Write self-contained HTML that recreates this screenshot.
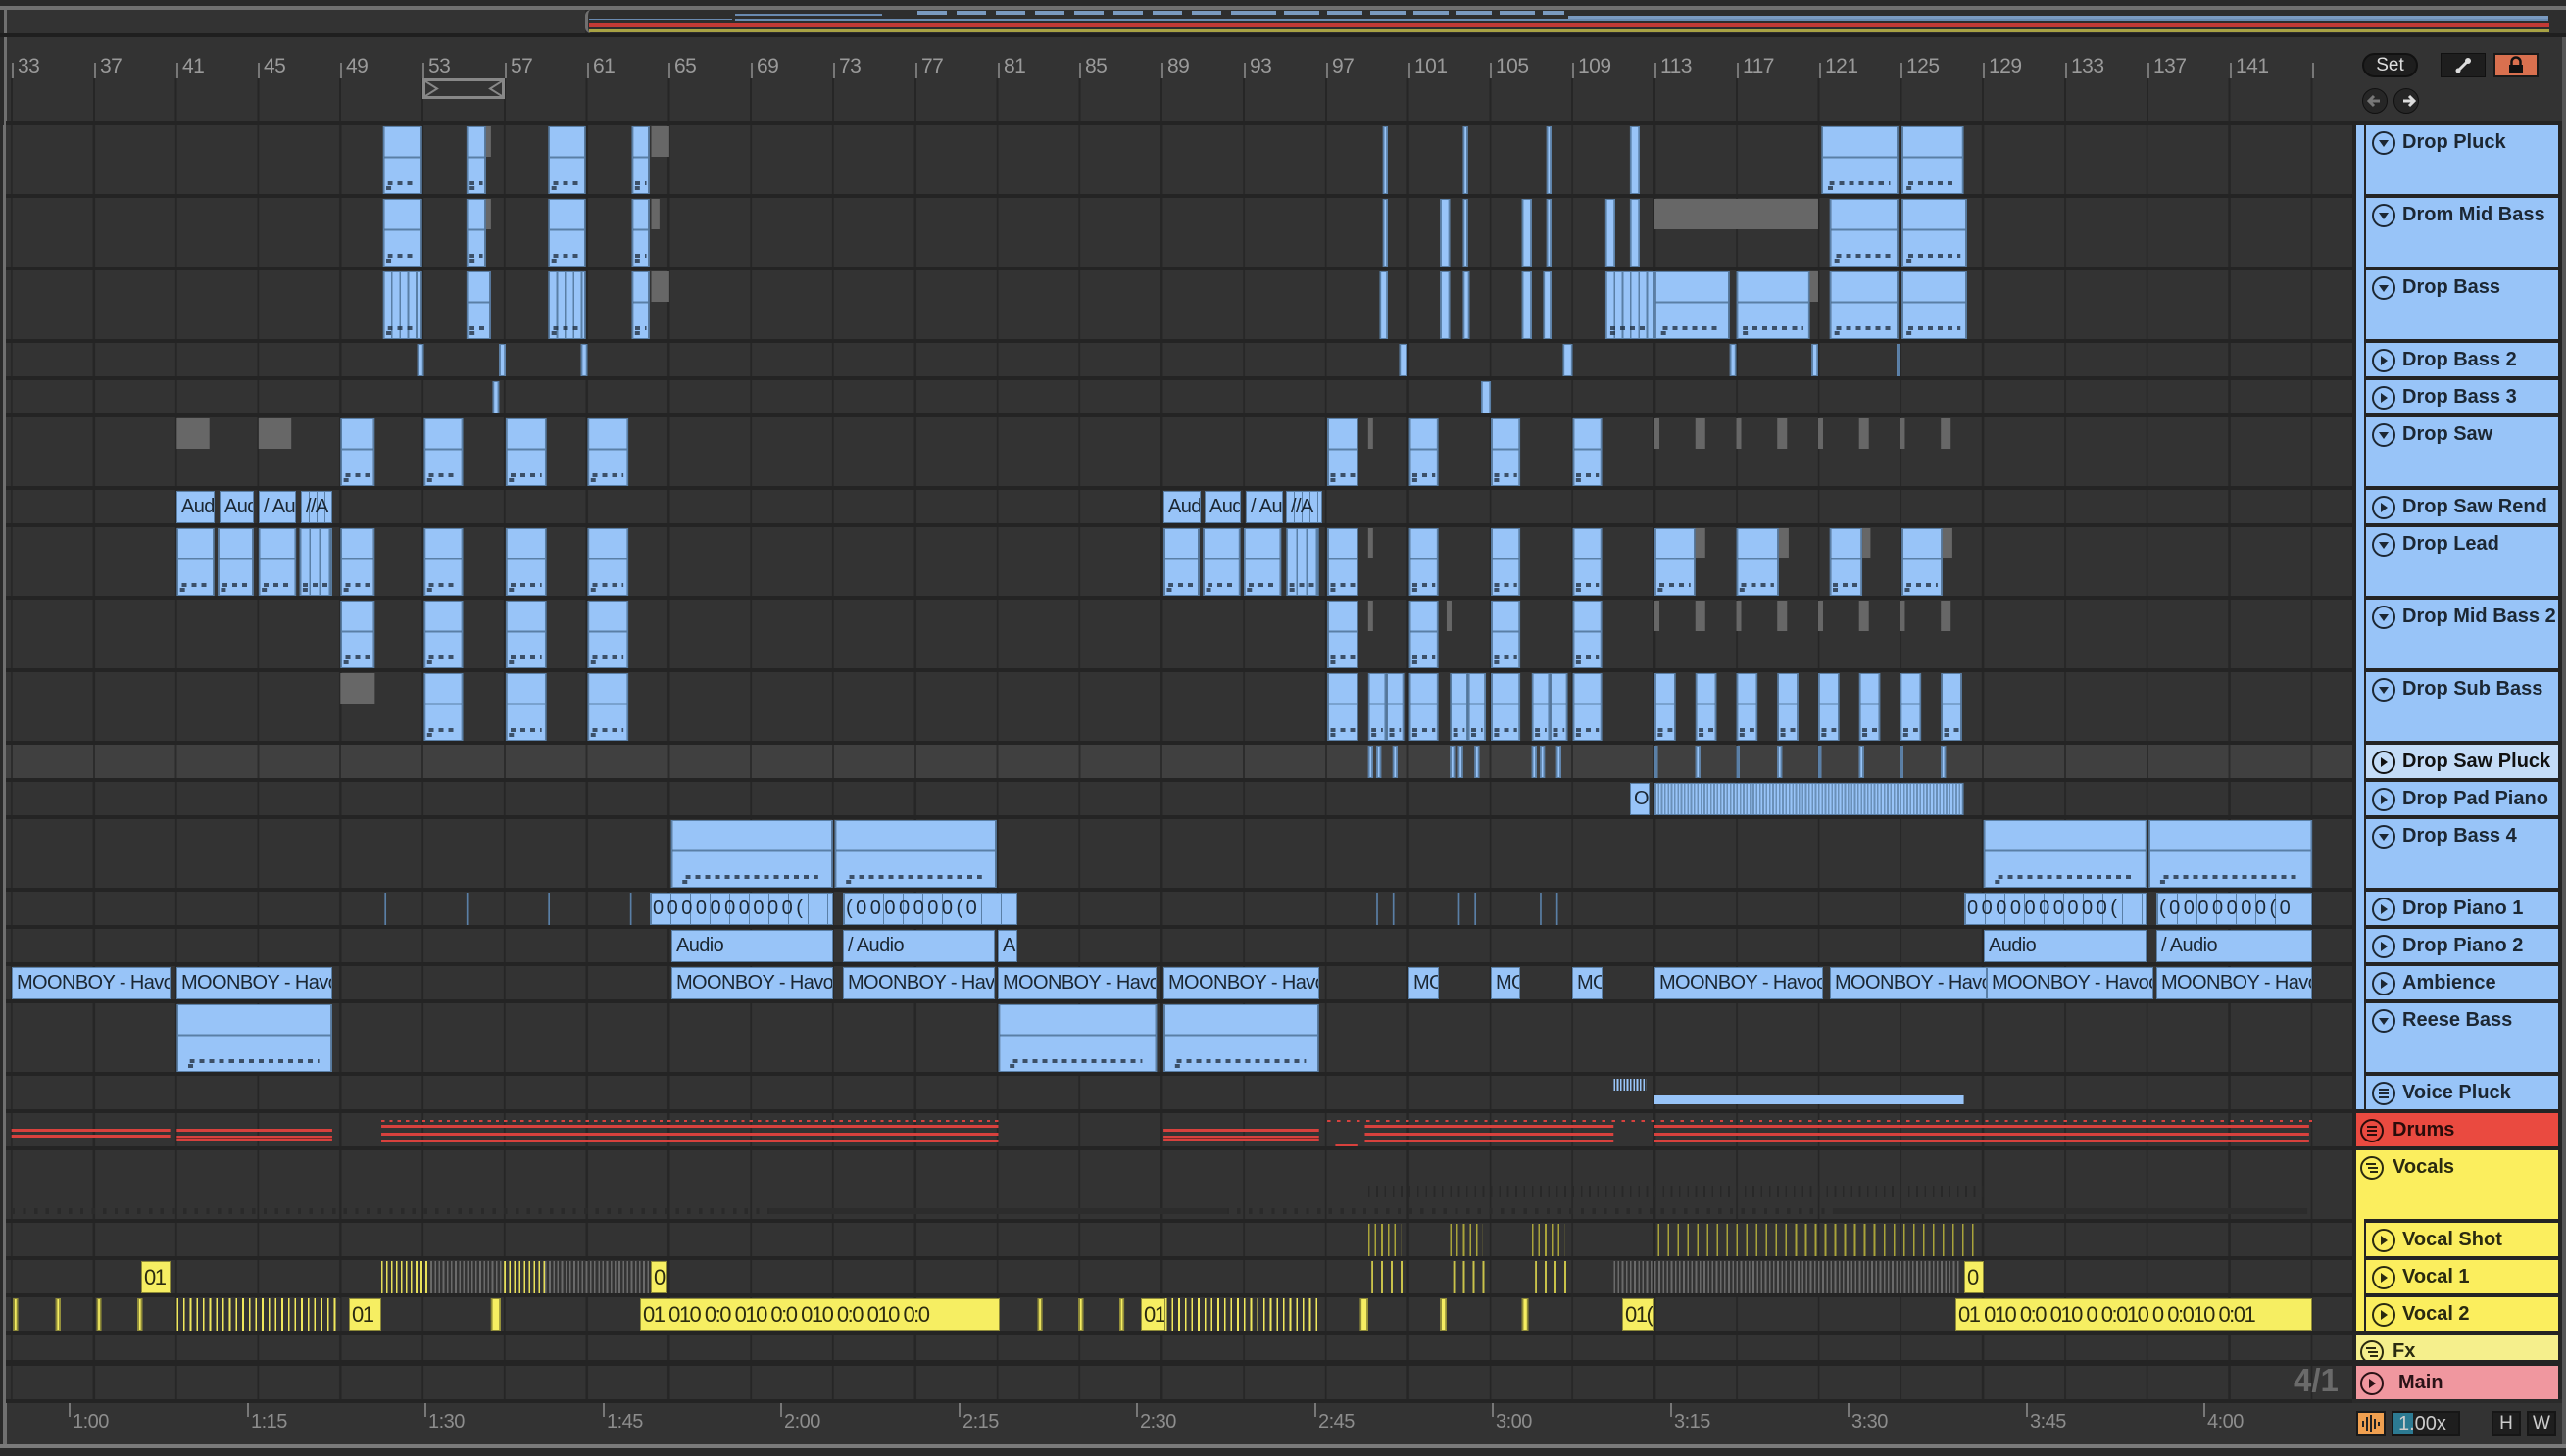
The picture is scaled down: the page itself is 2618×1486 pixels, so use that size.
<!DOCTYPE html>
<html><head><meta charset="utf-8"><style>
*{margin:0;padding:0;box-sizing:border-box}
body{width:2618px;height:1486px;background:#2a2a2a;position:relative;overflow:hidden;font-family:"Liberation Sans",sans-serif}
.a{position:absolute}
#arr{position:absolute;left:6px;top:128px;width:2394px;height:1300px;background-color:#333;
background-image:repeating-linear-gradient(90deg,#262626 0 2px,transparent 2px 83.8px);background-position:5px 0}
.sep{position:absolute;left:6px;width:2394px;height:4px;background:#242424}
.L{position:absolute;left:0;top:0;width:1568px;height:1486px;transform:scaleX(1.66964);transform-origin:0 0}
.c{position:absolute;border:1px solid #5a7fa6;background:linear-gradient(#98c4f8 0 44%,#5a7fa6 44% 47%,#98c4f8 47%)}
.c::after{content:"";position:absolute;left:8%;right:8%;bottom:12%;height:4px;background:repeating-linear-gradient(90deg,#1d2a38 0 3px,transparent 3px 6px);opacity:.75}
.c::before{content:"";position:absolute;left:6%;width:3px;bottom:4%;height:4px;background:#1d2a38;opacity:.75}
.s{position:absolute;border:1px solid #5a7fa6;background:#98c4f8}
.g{position:absolute;background:linear-gradient(#676767 0 45%,transparent 45%)}
.tl{position:absolute;width:1px;background:#5a7fa6}
.y{position:absolute;background:#f6ee62;border:1px solid #8e8a38}
.yl{position:absolute;width:1px;background:#a9a33a}
.ys{position:absolute;background:repeating-linear-gradient(90deg,#e8e05a 0 1px,transparent 1px 3px)}
.gs{position:absolute;background:repeating-linear-gradient(90deg,#6a6a6a 0 1px,transparent 1px 2.5px)}
.rd{position:absolute;background:#d8413d}
.t1{top:129px;height:69px}.t2{top:203px;height:69px}.t3{top:277px;height:69px}.t4{top:351px;height:33px}.t5{top:389px;height:33px}
.t6{top:427px;height:69px}.t7{top:501px;height:33px}.t8{top:539px;height:69px}.t9{top:613px;height:69px}.t10{top:687px;height:69px}
.t11{top:761px;height:33px}.t12{top:799px;height:33px}.t13{top:837px;height:69px}.t14{top:911px;height:33px}.t15{top:949px;height:33px}
.t16{top:987px;height:33px}.t17{top:1025px;height:69px}.t18{top:1099px;height:33px}.t19{top:1137px;height:33px}.t20{top:1175px;height:69px}
.t21{top:1249px;height:33px}.t22{top:1287px;height:33px}.t23{top:1325px;height:33px}
.lb{position:absolute;background:#98c4f8;border:1px solid #5a7fa6;color:#1b2733;font-size:20px;line-height:31px;padding-left:4px;overflow:hidden;white-space:nowrap;letter-spacing:-0.6px}
.yb{position:absolute;background:#f6ee62;border:1px solid #8e8a38;color:#2a2a10;font-size:22px;line-height:31px;padding-left:2px;overflow:hidden;white-space:nowrap;letter-spacing:-1.5px}
.bn{position:absolute;top:56px;color:#9a9a9a;font-size:21px;letter-spacing:-0.5px}
.tk{position:absolute;top:64px;width:2px;height:16px;background:#777}
.tm{position:absolute;top:1440px;color:#8d8d8d;font-size:20px;letter-spacing:-0.5px}
.tt{position:absolute;top:1432px;width:2px;height:14px;background:#777}
.h{position:absolute;left:2414px;width:196px;background:#98c4f8;color:#1c2733;font-size:20px;font-weight:bold;line-height:24px;padding:5px 0 0 37px;white-space:nowrap}
.h svg{position:absolute;left:5px;top:5px}
</style></head><body>

<!-- top overview -->
<div class="a" style="left:0;top:6px;width:2618px;height:4px;background:#707070"></div>
<div class="a" style="left:4px;top:10px;width:593px;height:24px;background:#333;border-left:3px solid #707070"></div>
<div class="a" style="left:597px;top:10px;width:2021px;height:24px;background:#2e2e2e;border-left:3px solid #707070;border-radius:6px 0 0 6px"></div>
<div class="a" style="left:0;top:34px;width:2618px;height:4px;background:#1f1f1f"></div>
<div class="a" style="left:601px;top:19px;width:146px;height:1px;background:#6a8ab0"></div>
<div class="a" style="left:750px;top:14px;width:150px;height:2px;background:#6a8ab0"></div>
<div class="a" style="left:750px;top:19px;width:1850px;height:2px;background:#6a8ab0"></div>
<div class="a" style="left:936px;top:11px;width:330px;height:4px;background:repeating-linear-gradient(90deg,#7a9ac0 0 30px,transparent 30px 40px)"></div>
<div class="a" style="left:1266px;top:11px;width:330px;height:4px;background:repeating-linear-gradient(90deg,#7a9ac0 0 36px,transparent 36px 44px)"></div>
<div class="a" style="left:1600px;top:16px;width:1000px;height:3px;background:#7a9ac0"></div>
<div class="a" style="left:601px;top:23px;width:2000px;height:5px;background:#c33a35"></div>
<div class="a" style="left:601px;top:30px;width:2000px;height:3px;background:#a8a244"></div>

<!-- ruler -->
<div class="a" style="left:4px;top:38px;width:2396px;height:90px;background:#333;border-left:3px solid #707070"></div>
<div class="a" style="left:6px;top:80px;width:2394px;height:44px;background-image:repeating-linear-gradient(90deg,#262626 0 2px,transparent 2px 83.8px);background-position:5px 0"></div>
<div class="a" style="left:6px;top:124px;width:2394px;height:4px;background:#242424"></div>
<div class="a" style="left:431px;top:80px;width:84px;height:21px;border:3px solid #888"></div>
<svg class="a" style="left:434px;top:83px" width="78" height="15"><path d="M0 0 L12 7.5 L0 15 M78 0 L66 7.5 L78 15" fill="none" stroke="#888" stroke-width="2"/></svg>

<div class="tk" style="left:12px"></div><div class="bn" style="left:18px">33</div>
<div class="tk" style="left:96px"></div><div class="bn" style="left:102px">37</div>
<div class="tk" style="left:180px"></div><div class="bn" style="left:186px">41</div>
<div class="tk" style="left:263px"></div><div class="bn" style="left:269px">45</div>
<div class="tk" style="left:347px"></div><div class="bn" style="left:353px">49</div>
<div class="tk" style="left:431px"></div><div class="bn" style="left:437px">53</div>
<div class="tk" style="left:515px"></div><div class="bn" style="left:521px">57</div>
<div class="tk" style="left:599px"></div><div class="bn" style="left:605px">61</div>
<div class="tk" style="left:682px"></div><div class="bn" style="left:688px">65</div>
<div class="tk" style="left:766px"></div><div class="bn" style="left:772px">69</div>
<div class="tk" style="left:850px"></div><div class="bn" style="left:856px">73</div>
<div class="tk" style="left:934px"></div><div class="bn" style="left:940px">77</div>
<div class="tk" style="left:1018px"></div><div class="bn" style="left:1024px">81</div>
<div class="tk" style="left:1101px"></div><div class="bn" style="left:1107px">85</div>
<div class="tk" style="left:1185px"></div><div class="bn" style="left:1191px">89</div>
<div class="tk" style="left:1269px"></div><div class="bn" style="left:1275px">93</div>
<div class="tk" style="left:1353px"></div><div class="bn" style="left:1359px">97</div>
<div class="tk" style="left:1437px"></div><div class="bn" style="left:1443px">101</div>
<div class="tk" style="left:1520px"></div><div class="bn" style="left:1526px">105</div>
<div class="tk" style="left:1604px"></div><div class="bn" style="left:1610px">109</div>
<div class="tk" style="left:1688px"></div><div class="bn" style="left:1694px">113</div>
<div class="tk" style="left:1772px"></div><div class="bn" style="left:1778px">117</div>
<div class="tk" style="left:1856px"></div><div class="bn" style="left:1862px">121</div>
<div class="tk" style="left:1939px"></div><div class="bn" style="left:1945px">125</div>
<div class="tk" style="left:2023px"></div><div class="bn" style="left:2029px">129</div>
<div class="tk" style="left:2107px"></div><div class="bn" style="left:2113px">133</div>
<div class="tk" style="left:2191px"></div><div class="bn" style="left:2197px">137</div>
<div class="tk" style="left:2275px"></div><div class="bn" style="left:2281px">141</div>
<div class="tk" style="left:2359px"></div>

<!-- arrangement -->
<div class="a" style="left:3px;top:128px;width:3px;height:1346px;background:#707070"></div>
<div id="arr"></div>
<div class="a" style="left:6px;top:760px;width:2394px;height:38px;background:#404040;background-image:repeating-linear-gradient(90deg,#2c2c2c 0 2px,transparent 2px 83.8px);background-position:5px 0"></div>
<div class="sep" style="top:198px"></div><div class="sep" style="top:272px"></div><div class="sep" style="top:346px"></div>
<div class="sep" style="top:384px"></div><div class="sep" style="top:422px"></div><div class="sep" style="top:496px"></div>
<div class="sep" style="top:534px"></div><div class="sep" style="top:608px"></div><div class="sep" style="top:682px"></div>
<div class="sep" style="top:756px"></div><div class="sep" style="top:794px"></div><div class="sep" style="top:832px"></div>
<div class="sep" style="top:906px"></div><div class="sep" style="top:944px"></div><div class="sep" style="top:982px"></div>
<div class="sep" style="top:1020px"></div><div class="sep" style="top:1094px"></div><div class="sep" style="top:1132px"></div>
<div class="sep" style="top:1170px"></div><div class="sep" style="top:1244px"></div><div class="sep" style="top:1282px"></div>
<div class="sep" style="top:1320px"></div><div class="sep" style="top:1358px"></div><div class="sep" style="top:1388px;height:6px"></div>
<div class="sep" style="top:1428px"></div>

<div class="L">
<!-- t1 -->
<i class="c t1" style="left:234px;width:24px"></i><i class="c t1" style="left:285px;width:12px"></i><i class="g t1" style="left:297px;width:3px"></i>
<i class="c t1" style="left:335px;width:23px"></i><i class="c t1" style="left:386px;width:11px"></i><i class="g t1" style="left:398px;width:11px"></i>
<i class="s t1" style="left:845px;width:3px"></i><i class="s t1" style="left:894px;width:3px"></i><i class="s t1" style="left:945px;width:3px"></i><i class="s t1" style="left:996px;width:6px"></i>
<i class="c t1" style="left:1113px;width:47px"></i><i class="c t1" style="left:1162px;width:38px"></i>
<!-- t2 -->
<i class="c t2" style="left:234px;width:24px"></i><i class="c t2" style="left:285px;width:12px"></i><i class="g t2" style="left:297px;width:3px"></i>
<i class="c t2" style="left:335px;width:23px"></i><i class="c t2" style="left:386px;width:11px"></i><i class="g t2" style="left:398px;width:5px"></i>
<i class="s t2" style="left:845px;width:3px"></i><i class="s t2" style="left:880px;width:6px"></i><i class="s t2" style="left:894px;width:3px"></i>
<i class="s t2" style="left:930px;width:6px"></i><i class="s t2" style="left:945px;width:3px"></i><i class="s t2" style="left:981px;width:6px"></i><i class="s t2" style="left:996px;width:6px"></i>
<i class="g t2" style="left:1011px;width:100px"></i><i class="c t2" style="left:1118px;width:42px"></i><i class="c t2" style="left:1162px;width:40px"></i>
<!-- t3 -->
<i class="c t3" style="left:234px;width:24px;background:repeating-linear-gradient(90deg,#98c4f8 0 4px,#5a7fa6 4px 5px)"></i><i class="c t3" style="left:285px;width:15px"></i>
<i class="c t3" style="left:335px;width:23px;background:repeating-linear-gradient(90deg,#98c4f8 0 4px,#5a7fa6 4px 5px)"></i><i class="c t3" style="left:386px;width:11px"></i><i class="g t3" style="left:398px;width:11px"></i>
<i class="s t3" style="left:843px;width:5px"></i><i class="s t3" style="left:880px;width:6px"></i><i class="s t3" style="left:894px;width:4px"></i>
<i class="s t3" style="left:930px;width:6px"></i><i class="s t3" style="left:943px;width:5px"></i><i class="c t3" style="left:981px;width:30px;background:repeating-linear-gradient(90deg,#98c4f8 0 4px,#5a7fa6 4px 5px)"></i>
<i class="c t3" style="left:1011px;width:46px"></i><i class="c t3" style="left:1061px;width:45px"></i><i class="g t3" style="left:1106px;width:5px"></i>
<i class="c t3" style="left:1118px;width:42px"></i><i class="c t3" style="left:1162px;width:40px"></i>
<!-- t4 t5 -->
<i class="s t4" style="left:255px;width:4px"></i><i class="s t4" style="left:305px;width:4px"></i><i class="s t4" style="left:355px;width:4px"></i>
<i class="s t4" style="left:855px;width:5px"></i><i class="s t4" style="left:955px;width:6px"></i><i class="s t4" style="left:1057px;width:4px"></i><i class="s t4" style="left:1107px;width:4px"></i><i class="s t4" style="left:1159px;width:2px"></i>
<i class="s t5" style="left:301px;width:4px"></i><i class="s t5" style="left:905px;width:6px"></i>
<!-- t6 -->
<i class="g t6" style="left:108px;width:20px"></i><i class="g t6" style="left:158px;width:20px"></i>
<i class="c t6" style="left:208px;width:21px"></i><i class="c t6" style="left:259px;width:24px"></i><i class="c t6" style="left:309px;width:25px"></i><i class="c t6" style="left:359px;width:25px"></i>
<i class="c t6" style="left:811px;width:19px"></i><i class="g t6" style="left:836px;width:3px"></i><i class="c t6" style="left:861px;width:18px"></i><i class="c t6" style="left:911px;width:18px"></i><i class="c t6" style="left:961px;width:18px"></i>
<i class="g t6" style="left:1011px;width:3px"></i><i class="g t6" style="left:1036px;width:6px"></i><i class="g t6" style="left:1061px;width:3px"></i><i class="g t6" style="left:1086px;width:6px"></i>
<i class="g t6" style="left:1111px;width:3px"></i><i class="g t6" style="left:1136px;width:6px"></i><i class="g t6" style="left:1161px;width:3px"></i><i class="g t6" style="left:1186px;width:6px"></i>
<!-- t8 -->
<i class="c t8" style="left:108px;width:23px"></i><i class="c t8" style="left:133px;width:22px"></i><i class="c t8" style="left:158px;width:23px"></i><i class="c t8" style="left:183px;width:20px;background:repeating-linear-gradient(90deg,#98c4f8 0 5px,#5a7fa6 5px 6px)"></i>
<i class="c t8" style="left:208px;width:21px"></i><i class="c t8" style="left:259px;width:24px"></i><i class="c t8" style="left:309px;width:25px"></i><i class="c t8" style="left:359px;width:25px"></i>
<i class="c t8" style="left:711px;width:22px"></i><i class="c t8" style="left:735px;width:23px"></i><i class="c t8" style="left:760px;width:23px"></i><i class="c t8" style="left:786px;width:20px;background:repeating-linear-gradient(90deg,#98c4f8 0 5px,#5a7fa6 5px 6px)"></i>
<i class="c t8" style="left:811px;width:19px"></i><i class="g t8" style="left:836px;width:3px"></i><i class="c t8" style="left:861px;width:18px"></i><i class="c t8" style="left:911px;width:18px"></i><i class="c t8" style="left:961px;width:18px"></i>
<i class="c t8" style="left:1011px;width:25px"></i><i class="g t8" style="left:1036px;width:6px"></i><i class="c t8" style="left:1061px;width:26px"></i><i class="g t8" style="left:1087px;width:6px"></i>
<i class="c t8" style="left:1118px;width:20px"></i><i class="g t8" style="left:1138px;width:5px"></i><i class="c t8" style="left:1162px;width:25px"></i><i class="g t8" style="left:1187px;width:6px"></i>
<!-- t9 -->
<i class="c t9" style="left:208px;width:21px"></i><i class="c t9" style="left:259px;width:24px"></i><i class="c t9" style="left:309px;width:25px"></i><i class="c t9" style="left:359px;width:25px"></i>
<i class="c t9" style="left:811px;width:19px"></i><i class="g t9" style="left:836px;width:3px"></i><i class="c t9" style="left:861px;width:18px"></i><i class="g t9" style="left:884px;width:3px"></i><i class="c t9" style="left:911px;width:18px"></i><i class="c t9" style="left:961px;width:18px"></i>
<i class="g t9" style="left:1011px;width:3px"></i><i class="g t9" style="left:1036px;width:6px"></i><i class="g t9" style="left:1061px;width:3px"></i><i class="g t9" style="left:1086px;width:6px"></i>
<i class="g t9" style="left:1111px;width:3px"></i><i class="g t9" style="left:1136px;width:6px"></i><i class="g t9" style="left:1161px;width:3px"></i><i class="g t9" style="left:1186px;width:6px"></i>
<!-- t10 -->
<i class="g t10" style="left:208px;width:21px"></i><i class="c t10" style="left:259px;width:24px"></i><i class="c t10" style="left:309px;width:25px"></i><i class="c t10" style="left:359px;width:25px"></i>
<i class="c t10" style="left:811px;width:19px"></i><i class="c t10" style="left:836px;width:11px"></i><i class="c t10" style="left:847px;width:11px"></i><i class="c t10" style="left:861px;width:18px"></i>
<i class="c t10" style="left:886px;width:11px"></i><i class="c t10" style="left:897px;width:11px"></i><i class="c t10" style="left:911px;width:18px"></i>
<i class="c t10" style="left:936px;width:11px"></i><i class="c t10" style="left:947px;width:11px"></i><i class="c t10" style="left:961px;width:18px"></i>
<i class="c t10" style="left:1011px;width:13px"></i><i class="c t10" style="left:1036px;width:13px"></i><i class="c t10" style="left:1061px;width:13px"></i><i class="c t10" style="left:1086px;width:13px"></i>
<i class="c t10" style="left:1111px;width:13px"></i><i class="c t10" style="left:1136px;width:13px"></i><i class="c t10" style="left:1161px;width:13px"></i><i class="c t10" style="left:1186px;width:13px"></i>
<!-- t11 -->
<i class="s t11" style="left:836px;width:3px"></i><i class="s t11" style="left:841px;width:3px"></i><i class="s t11" style="left:851px;width:3px"></i>
<i class="s t11" style="left:886px;width:3px"></i><i class="s t11" style="left:891px;width:3px"></i><i class="s t11" style="left:901px;width:3px"></i>
<i class="s t11" style="left:936px;width:3px"></i><i class="s t11" style="left:941px;width:3px"></i><i class="s t11" style="left:951px;width:3px"></i>
<i class="s t11" style="left:1011px;width:2px"></i><i class="s t11" style="left:1036px;width:3px"></i><i class="s t11" style="left:1061px;width:2px"></i><i class="s t11" style="left:1086px;width:3px"></i>
<i class="s t11" style="left:1111px;width:2px"></i><i class="s t11" style="left:1136px;width:3px"></i><i class="s t11" style="left:1161px;width:2px"></i><i class="s t11" style="left:1186px;width:3px"></i>
<!-- t12 -->
<i class="s t12" style="left:1011px;width:189px;background:repeating-linear-gradient(90deg,#98c4f8 0 1px,#6a90b8 1px 2px)"></i>
<!-- t13 -->
<i class="c t13" style="left:410px;width:99px"></i><i class="c t13" style="left:510px;width:99px"></i><i class="c t13" style="left:1212px;width:100px"></i><i class="c t13" style="left:1313px;width:100px"></i>
<!-- t14 thin -->
<i class="tl t14" style="left:235px"></i><i class="tl t14" style="left:285px"></i><i class="tl t14" style="left:335px"></i><i class="tl t14" style="left:385px"></i>
<i class="tl t14" style="left:841px"></i><i class="tl t14" style="left:851px"></i><i class="tl t14" style="left:891px"></i><i class="tl t14" style="left:901px"></i><i class="tl t14" style="left:941px"></i><i class="tl t14" style="left:951px"></i>
<!-- t17 -->
<i class="c t17" style="left:108px;width:95px"></i><i class="c t17" style="left:610px;width:97px"></i><i class="c t17" style="left:711px;width:95px"></i>
<!-- t18 -->
<i class="s" style="left:986px;top:1101px;width:20px;height:12px;background:repeating-linear-gradient(90deg,#98c4f8 0 1px,#333 1px 2px);border:none"></i>
<i class="s" style="left:1011px;top:1118px;width:189px;height:9px;border:none"></i>
<!-- drums -->
<i class="rd" style="left:7px;top:1152px;width:97px;height:3px"></i><i class="rd" style="left:7px;top:1158px;width:97px;height:3px"></i>
<i class="rd" style="left:108px;top:1152px;width:95px;height:3px"></i><i class="rd" style="left:108px;top:1159px;width:95px;height:6px;background:repeating-linear-gradient(#d8413d 0 2px,#7a2a28 2px 3px)"></i>
<i class="rd" style="left:233px;top:1143px;width:377px;height:2px;background:repeating-linear-gradient(90deg,#d8413d 0 2px,transparent 2px 5px)"></i>
<i class="rd" style="left:233px;top:1148px;width:377px;height:3px"></i><i class="rd" style="left:233px;top:1156px;width:377px;height:3px"></i><i class="rd" style="left:233px;top:1163px;width:377px;height:3px"></i>
<i class="rd" style="left:711px;top:1152px;width:95px;height:3px"></i><i class="rd" style="left:711px;top:1159px;width:95px;height:6px;background:repeating-linear-gradient(#d8413d 0 2px,#7a2a28 2px 3px)"></i>
<i class="rd" style="left:811px;top:1143px;width:605px;height:2px;background:repeating-linear-gradient(90deg,#d8413d 0 2px,transparent 2px 6px)"></i>
<i class="rd" style="left:834px;top:1148px;width:152px;height:3px"></i><i class="rd" style="left:834px;top:1156px;width:152px;height:3px"></i><i class="rd" style="left:834px;top:1163px;width:152px;height:3px"></i>
<i class="rd" style="left:1011px;top:1148px;width:400px;height:3px"></i><i class="rd" style="left:1011px;top:1156px;width:400px;height:3px"></i><i class="rd" style="left:1011px;top:1163px;width:400px;height:3px"></i>
<i class="rd" style="left:816px;top:1168px;width:14px;height:2px"></i>
<!-- vocals faint -->
<i class="a" style="left:7px;top:1233px;width:1405px;height:6px;background:repeating-linear-gradient(90deg,#2a2a2a 0 2px,transparent 2px 7px)"></i>
<i class="a" style="left:470px;top:1233px;width:280px;height:6px;background:#2c2c2c"></i>
<i class="a" style="left:1120px;top:1233px;width:290px;height:6px;background:#2c2c2c"></i>
<i class="a" style="left:836px;top:1210px;width:380px;height:12px;background:repeating-linear-gradient(90deg,#282828 0 1px,transparent 1px 5px)"></i>
<!-- vocal shot -->
<i class="ys t21" style="left:836px;width:20px;background:repeating-linear-gradient(90deg,#a9a33a 0 1px,transparent 1px 4px)"></i>
<i class="ys t21" style="left:886px;width:20px;background:repeating-linear-gradient(90deg,#a9a33a 0 1px,transparent 1px 4px)"></i>
<i class="ys t21" style="left:936px;width:20px;background:repeating-linear-gradient(90deg,#a9a33a 0 1px,transparent 1px 4px)"></i>
<i class="ys t21" style="left:1013px;width:197px;background:repeating-linear-gradient(90deg,#a9a33a 0 1px,transparent 1px 6px)"></i>
<!-- vocal 1 -->
<i class="ys t22" style="left:233px;width:30px"></i><i class="gs t22" style="left:263px;width:45px"></i><i class="ys t22" style="left:308px;width:25px"></i><i class="gs t22" style="left:333px;width:65px"></i>
<i class="ys t22" style="left:838px;width:20px;background:repeating-linear-gradient(90deg,#c9c24a 0 1px,transparent 1px 6px)"></i>
<i class="ys t22" style="left:888px;width:20px;background:repeating-linear-gradient(90deg,#c9c24a 0 1px,transparent 1px 6px)"></i>
<i class="ys t22" style="left:938px;width:22px;background:repeating-linear-gradient(90deg,#c9c24a 0 1px,transparent 1px 6px)"></i>
<i class="gs t22" style="left:986px;width:212px"></i>
<!-- vocal 2 -->
<i class="y t23" style="left:8px;width:3px"></i><i class="y t23" style="left:34px;width:3px"></i><i class="y t23" style="left:59px;width:3px"></i><i class="y t23" style="left:84px;width:3px"></i>
<i class="ys t23" style="left:108px;width:100px;background:repeating-linear-gradient(90deg,#f0e85c 0 1px,#333 1px 4px)"></i>
<i class="y t23" style="left:300px;width:6px"></i>
<i class="y t23" style="left:634px;width:3px"></i><i class="y t23" style="left:659px;width:3px"></i><i class="y t23" style="left:684px;width:3px"></i>
<i class="ys t23" style="left:712px;width:94px;background:repeating-linear-gradient(90deg,#f0e85c 0 1px,#333 1px 4px)"></i>
<i class="y t23" style="left:831px;width:5px"></i><i class="y t23" style="left:880px;width:4px"></i><i class="y t23" style="left:930px;width:4px"></i>
</div>

<!-- labeled clips (orig coords) -->
<div class="lb" style="left:180px;top:501px;width:39px;height:33px">Audio</div>
<div class="lb" style="left:224px;top:501px;width:35px;height:33px">Audio</div>
<div class="lb" style="left:264px;top:501px;width:38px;height:33px">/ Au</div>
<div class="lb" style="left:307px;top:501px;width:32px;height:33px;background:repeating-linear-gradient(90deg,#98c4f8 0 7px,#5a7fa6 7px 8px)">//A</div>
<div class="lb" style="left:1187px;top:501px;width:38px;height:33px">Audio</div>
<div class="lb" style="left:1229px;top:501px;width:37px;height:33px">Audio</div>
<div class="lb" style="left:1271px;top:501px;width:38px;height:33px">/ Au</div>
<div class="lb" style="left:1312px;top:501px;width:37px;height:33px;background:repeating-linear-gradient(90deg,#98c4f8 0 7px,#5a7fa6 7px 8px)">//A</div>

<div class="lb" style="left:1663px;top:799px;width:20px;height:33px;padding-left:3px">O</div>

<div class="lb" style="left:663px;top:911px;width:187px;height:33px;padding-left:2px;letter-spacing:3.5px;background:repeating-linear-gradient(90deg,#5a7fa6 0 1px,#98c4f8 1px 20px)">0000000000(</div>
<div class="lb" style="left:860px;top:911px;width:178px;height:33px;padding-left:2px;letter-spacing:3.5px;background:repeating-linear-gradient(90deg,#5a7fa6 0 1px,#98c4f8 1px 20px)">(0000000(0</div>
<div class="lb" style="left:2004px;top:911px;width:186px;height:33px;padding-left:2px;letter-spacing:3.5px;background:repeating-linear-gradient(90deg,#5a7fa6 0 1px,#98c4f8 1px 20px)">0000000000(</div>
<div class="lb" style="left:2200px;top:911px;width:159px;height:33px;padding-left:2px;letter-spacing:3.5px;background:repeating-linear-gradient(90deg,#5a7fa6 0 1px,#98c4f8 1px 20px)">(0000000(0</div>

<div class="lb" style="left:685px;top:949px;width:165px;height:33px">Audio</div>
<div class="lb" style="left:860px;top:949px;width:155px;height:33px">/ Audio</div>
<div class="lb" style="left:1018px;top:949px;width:20px;height:33px">A</div>
<div class="lb" style="left:2024px;top:949px;width:166px;height:33px">Audio</div>
<div class="lb" style="left:2200px;top:949px;width:159px;height:33px">/ Audio</div>

<div class="lb" style="left:12px;top:987px;width:162px;height:33px">MOONBOY - Havoc</div>
<div class="lb" style="left:180px;top:987px;width:159px;height:33px">MOONBOY - Havoc</div>
<div class="lb" style="left:685px;top:987px;width:165px;height:33px">MOONBOY - Havoc</div>
<div class="lb" style="left:860px;top:987px;width:155px;height:33px">MOONBOY - Havoc</div>
<div class="lb" style="left:1018px;top:987px;width:162px;height:33px">MOONBOY - Havoc</div>
<div class="lb" style="left:1187px;top:987px;width:159px;height:33px">MOONBOY - Havoc</div>
<div class="lb" style="left:1437px;top:987px;width:31px;height:33px">MO</div>
<div class="lb" style="left:1521px;top:987px;width:30px;height:33px">MO</div>
<div class="lb" style="left:1604px;top:987px;width:31px;height:33px">MO</div>
<div class="lb" style="left:1688px;top:987px;width:172px;height:33px">MOONBOY - Havoc</div>
<div class="lb" style="left:1867px;top:987px;width:160px;height:33px">MOONBOY - Havoc</div>
<div class="lb" style="left:2027px;top:987px;width:170px;height:33px">MOONBOY - Havoc</div>
<div class="lb" style="left:2200px;top:987px;width:159px;height:33px">MOONBOY - Havoc</div>

<div class="yb" style="left:144px;top:1287px;width:30px;height:33px">01</div>
<div class="yb" style="left:664px;top:1287px;width:17px;height:33px">0</div>
<div class="yb" style="left:2004px;top:1287px;width:20px;height:33px">0</div>
<div class="yb" style="left:356px;top:1325px;width:33px;height:33px">01</div>
<div class="yb" style="left:653px;top:1325px;width:367px;height:33px">01 010 0:0 010 0:0 010 0:0 010 0:0</div>
<div class="yb" style="left:1164px;top:1325px;width:25px;height:33px">01</div>
<div class="yb" style="left:1655px;top:1325px;width:33px;height:33px">01(</div>
<div class="yb" style="left:1995px;top:1325px;width:364px;height:33px">01 010 0:0 010 0 0:010 0 0:010 0:01</div>

<!-- 4/1 -->
<div class="a" style="left:2340px;top:1390px;color:#6a6a6a;font-size:33px;font-weight:bold">4/1</div>

<!-- bottom ruler -->
<div class="a" style="left:4px;top:1432px;width:2396px;height:42px;background:#333;border-left:3px solid #707070"></div>
<div class="a" style="left:0;top:1474px;width:2618px;height:4px;background:#7a7a7a"></div>
<div class="a" style="left:0;top:1478px;width:2618px;height:8px;background:#2a2a2a"></div>
<div class="tt" style="left:70px"></div><div class="tm" style="left:74px">1:00</div>
<div class="tt" style="left:252px"></div><div class="tm" style="left:256px">1:15</div>
<div class="tt" style="left:433px"></div><div class="tm" style="left:437px">1:30</div>
<div class="tt" style="left:615px"></div><div class="tm" style="left:619px">1:45</div>
<div class="tt" style="left:796px"></div><div class="tm" style="left:800px">2:00</div>
<div class="tt" style="left:978px"></div><div class="tm" style="left:982px">2:15</div>
<div class="tt" style="left:1159px"></div><div class="tm" style="left:1163px">2:30</div>
<div class="tt" style="left:1341px"></div><div class="tm" style="left:1345px">2:45</div>
<div class="tt" style="left:1522px"></div><div class="tm" style="left:1526px">3:00</div>
<div class="tt" style="left:1704px"></div><div class="tm" style="left:1708px">3:15</div>
<div class="tt" style="left:1885px"></div><div class="tm" style="left:1889px">3:30</div>
<div class="tt" style="left:2067px"></div><div class="tm" style="left:2071px">3:45</div>
<div class="tt" style="left:2248px"></div><div class="tm" style="left:2252px">4:00</div>

<!-- right panel -->
<div class="a" style="left:2400px;top:38px;width:218px;height:90px;background:#333"></div>
<div class="a" style="left:2400px;top:124px;width:218px;height:4px;background:#242424"></div>
<div class="a" style="left:2400px;top:128px;width:218px;height:1300px;background:#242424"></div>
<div class="a" style="left:2614px;top:38px;width:4px;height:1436px;background:#555"></div>
<div class="a" style="left:2410px;top:54px;width:57px;height:25px;background:#1e1e1e;border:2px solid #111;border-radius:13px;color:#ddd;font-size:19px;text-align:center;line-height:21px">Set</div>
<div class="a" style="left:2490px;top:54px;width:46px;height:25px;background:#1e1e1e;border:1px solid #111"></div>
<svg class="a" style="left:2503px;top:57px" width="20" height="20"><path d="M5 15 L15 5" stroke="#ddd" stroke-width="3"/><circle cx="15" cy="5" r="3" fill="#ddd"/><circle cx="5" cy="15" r="2.5" fill="#ddd"/></svg>
<div class="a" style="left:2544px;top:54px;width:46px;height:25px;background:#d9704f;border:2px solid #1a1a1a"></div>
<svg class="a" style="left:2558px;top:57px" width="18" height="19"><path d="M4.5 9 V6 a4.5 4.5 0 0 1 9 0 V9" fill="none" stroke="#111" stroke-width="2.5"/><rect x="2" y="9" width="14" height="9" fill="#111"/></svg>
<div class="a" style="left:2410px;top:90px;width:26px;height:26px;border-radius:13px;background:#262626;border:1px solid #111"></div>
<div class="a" style="left:2442px;top:90px;width:26px;height:26px;border-radius:13px;background:#262626;border:1px solid #111"></div>
<svg class="a" style="left:2410px;top:90px" width="60" height="26"><path d="M18 13 H8 M12 8 L7 13 L12 18" stroke="#777" stroke-width="3" fill="none"/><path d="M42 13 H52 M48 8 L53 13 L48 18" stroke="#ddd" stroke-width="3" fill="none"/></svg>

<!-- headers -->
<div class="a" style="left:2404px;top:128px;width:8px;height:1004px;background:#98c4f8"></div>
<div class="h" style="top:128px;height:70px"><svg width="26" height="26"><circle cx="13" cy="13" r="11" fill="none" stroke="#1c2733" stroke-width="2"/><path d="M8 10 H18 L13 17 Z" fill="#1c2733"/></svg>Drop Pluck</div>
<div class="h" style="top:202px;height:70px"><svg width="26" height="26"><circle cx="13" cy="13" r="11" fill="none" stroke="#1c2733" stroke-width="2"/><path d="M8 10 H18 L13 17 Z" fill="#1c2733"/></svg>Drom Mid Bass</div>
<div class="h" style="top:276px;height:70px"><svg width="26" height="26"><circle cx="13" cy="13" r="11" fill="none" stroke="#1c2733" stroke-width="2"/><path d="M8 10 H18 L13 17 Z" fill="#1c2733"/></svg>Drop Bass</div>
<div class="h" style="top:350px;height:34px"><svg width="26" height="26"><circle cx="13" cy="13" r="11" fill="none" stroke="#1c2733" stroke-width="2"/><path d="M10 8 V18 L17 13 Z" fill="#1c2733"/></svg>Drop Bass 2</div>
<div class="h" style="top:388px;height:34px"><svg width="26" height="26"><circle cx="13" cy="13" r="11" fill="none" stroke="#1c2733" stroke-width="2"/><path d="M10 8 V18 L17 13 Z" fill="#1c2733"/></svg>Drop Bass 3</div>
<div class="h" style="top:426px;height:70px"><svg width="26" height="26"><circle cx="13" cy="13" r="11" fill="none" stroke="#1c2733" stroke-width="2"/><path d="M8 10 H18 L13 17 Z" fill="#1c2733"/></svg>Drop Saw</div>
<div class="h" style="top:500px;height:34px"><svg width="26" height="26"><circle cx="13" cy="13" r="11" fill="none" stroke="#1c2733" stroke-width="2"/><path d="M10 8 V18 L17 13 Z" fill="#1c2733"/></svg>Drop Saw Rend</div>
<div class="h" style="top:538px;height:70px"><svg width="26" height="26"><circle cx="13" cy="13" r="11" fill="none" stroke="#1c2733" stroke-width="2"/><path d="M8 10 H18 L13 17 Z" fill="#1c2733"/></svg>Drop Lead</div>
<div class="h" style="top:612px;height:70px"><svg width="26" height="26"><circle cx="13" cy="13" r="11" fill="none" stroke="#1c2733" stroke-width="2"/><path d="M8 10 H18 L13 17 Z" fill="#1c2733"/></svg>Drop Mid Bass 2</div>
<div class="h" style="top:686px;height:70px"><svg width="26" height="26"><circle cx="13" cy="13" r="11" fill="none" stroke="#1c2733" stroke-width="2"/><path d="M8 10 H18 L13 17 Z" fill="#1c2733"/></svg>Drop Sub Bass</div>
<div class="h" style="top:760px;height:34px;background:#c4dcf7;color:#111"><svg width="26" height="26"><circle cx="13" cy="13" r="11" fill="none" stroke="#111" stroke-width="2"/><path d="M10 8 V18 L17 13 Z" fill="#111"/></svg>Drop Saw Pluck</div>
<div class="h" style="top:798px;height:34px"><svg width="26" height="26"><circle cx="13" cy="13" r="11" fill="none" stroke="#1c2733" stroke-width="2"/><path d="M10 8 V18 L17 13 Z" fill="#1c2733"/></svg>Drop Pad Piano</div>
<div class="h" style="top:836px;height:70px"><svg width="26" height="26"><circle cx="13" cy="13" r="11" fill="none" stroke="#1c2733" stroke-width="2"/><path d="M8 10 H18 L13 17 Z" fill="#1c2733"/></svg>Drop Bass 4</div>
<div class="h" style="top:910px;height:34px"><svg width="26" height="26"><circle cx="13" cy="13" r="11" fill="none" stroke="#1c2733" stroke-width="2"/><path d="M10 8 V18 L17 13 Z" fill="#1c2733"/></svg>Drop Piano 1</div>
<div class="h" style="top:948px;height:34px"><svg width="26" height="26"><circle cx="13" cy="13" r="11" fill="none" stroke="#1c2733" stroke-width="2"/><path d="M10 8 V18 L17 13 Z" fill="#1c2733"/></svg>Drop Piano 2</div>
<div class="h" style="top:986px;height:34px"><svg width="26" height="26"><circle cx="13" cy="13" r="11" fill="none" stroke="#1c2733" stroke-width="2"/><path d="M10 8 V18 L17 13 Z" fill="#1c2733"/></svg>Ambience</div>
<div class="h" style="top:1024px;height:70px"><svg width="26" height="26"><circle cx="13" cy="13" r="11" fill="none" stroke="#1c2733" stroke-width="2"/><path d="M8 10 H18 L13 17 Z" fill="#1c2733"/></svg>Reese Bass</div>
<div class="h" style="top:1098px;height:34px"><svg width="26" height="26"><circle cx="13" cy="13" r="11" fill="none" stroke="#1c2733" stroke-width="2"/><path d="M8 9 H18 M8 13 H18 M8 17 H18" stroke="#1c2733" stroke-width="2"/></svg>Voice Pluck</div>
<div class="h" style="left:2404px;width:206px;top:1136px;height:34px;background:#ea4a40;color:#2a0c0a;padding-left:37px"><svg width="26" height="26" style="left:3px"><circle cx="13" cy="13" r="11" fill="none" stroke="#2a0c0a" stroke-width="2"/><path d="M8 9 H18 M8 13 H18 M8 17 H18" stroke="#2a0c0a" stroke-width="2"/></svg>Drums</div>
<div class="h" style="left:2404px;width:206px;top:1174px;height:70px;background:#fbee5e;color:#2a2a10;padding-left:37px"><svg width="26" height="26" style="left:3px"><circle cx="13" cy="13" r="11" fill="none" stroke="#2a2a10" stroke-width="2"/><path d="M7 9 H17 M9 13 H19 M11 17 H19" stroke="#2a2a10" stroke-width="2"/></svg>Vocals</div>
<div class="a" style="left:2404px;top:1244px;width:8px;height:114px;background:#fbee5e"></div>
<div class="h" style="top:1248px;height:34px;background:#fbee5e;color:#2a2a10"><svg width="26" height="26"><circle cx="13" cy="13" r="11" fill="none" stroke="#2a2a10" stroke-width="2"/><path d="M10 8 V18 L17 13 Z" fill="#2a2a10"/></svg>Vocal Shot</div>
<div class="h" style="top:1286px;height:34px;background:#fbee5e;color:#2a2a10"><svg width="26" height="26"><circle cx="13" cy="13" r="11" fill="none" stroke="#2a2a10" stroke-width="2"/><path d="M10 8 V18 L17 13 Z" fill="#2a2a10"/></svg>Vocal 1</div>
<div class="h" style="top:1324px;height:34px;background:#fbee5e;color:#2a2a10"><svg width="26" height="26"><circle cx="13" cy="13" r="11" fill="none" stroke="#2a2a10" stroke-width="2"/><path d="M10 8 V18 L17 13 Z" fill="#2a2a10"/></svg>Vocal 2</div>
<div class="h" style="left:2404px;width:206px;top:1362px;height:26px;background:#f5ef8c;color:#2a2a10;padding-left:37px;overflow:hidden"><svg width="26" height="26" style="left:3px"><circle cx="13" cy="13" r="11" fill="none" stroke="#2a2a10" stroke-width="2"/><path d="M7 9 H17 M9 13 H19 M11 17 H19" stroke="#2a2a10" stroke-width="2"/></svg>Fx</div>
<div class="h" style="left:2404px;width:206px;top:1394px;height:34px;background:#f0979f;color:#2a1216;padding-left:43px"><svg width="26" height="26" style="left:3px"><circle cx="13" cy="13" r="11" fill="none" stroke="#2a1216" stroke-width="2"/><path d="M10 8 V18 L17 13 Z" fill="#2a1216"/></svg>Main</div>

<!-- bottom right controls -->
<div class="a" style="left:2400px;top:1432px;width:214px;height:42px;background:#333"></div>
<div class="a" style="left:2404px;top:1440px;width:30px;height:26px;background:#f0a050;border:2px solid #1a1a1a"></div>
<svg class="a" style="left:2406px;top:1442px" width="26" height="22"><path d="M5 8 V14 M9 4 V18 M13 2 V20 M17 6 V16 M21 9 V13" stroke="#222" stroke-width="2"/></svg>
<div class="a" style="left:2440px;top:1440px;width:70px;height:26px;background:#1e1e1e;border:2px solid #161616"></div>
<div class="a" style="left:2442px;top:1442px;width:20px;height:22px;background:#2c7a92"></div>
<div class="a" style="left:2447px;top:1442px;color:#ccc;font-size:20px;line-height:22px">1.00x</div>
<div class="a" style="left:2542px;top:1440px;width:30px;height:26px;background:#1e1e1e;border:2px solid #161616;color:#ccc;font-size:19px;text-align:center;line-height:22px">H</div>
<div class="a" style="left:2578px;top:1440px;width:30px;height:26px;background:#1e1e1e;border:2px solid #161616;color:#ccc;font-size:19px;text-align:center;line-height:22px">W</div>
</body></html>
